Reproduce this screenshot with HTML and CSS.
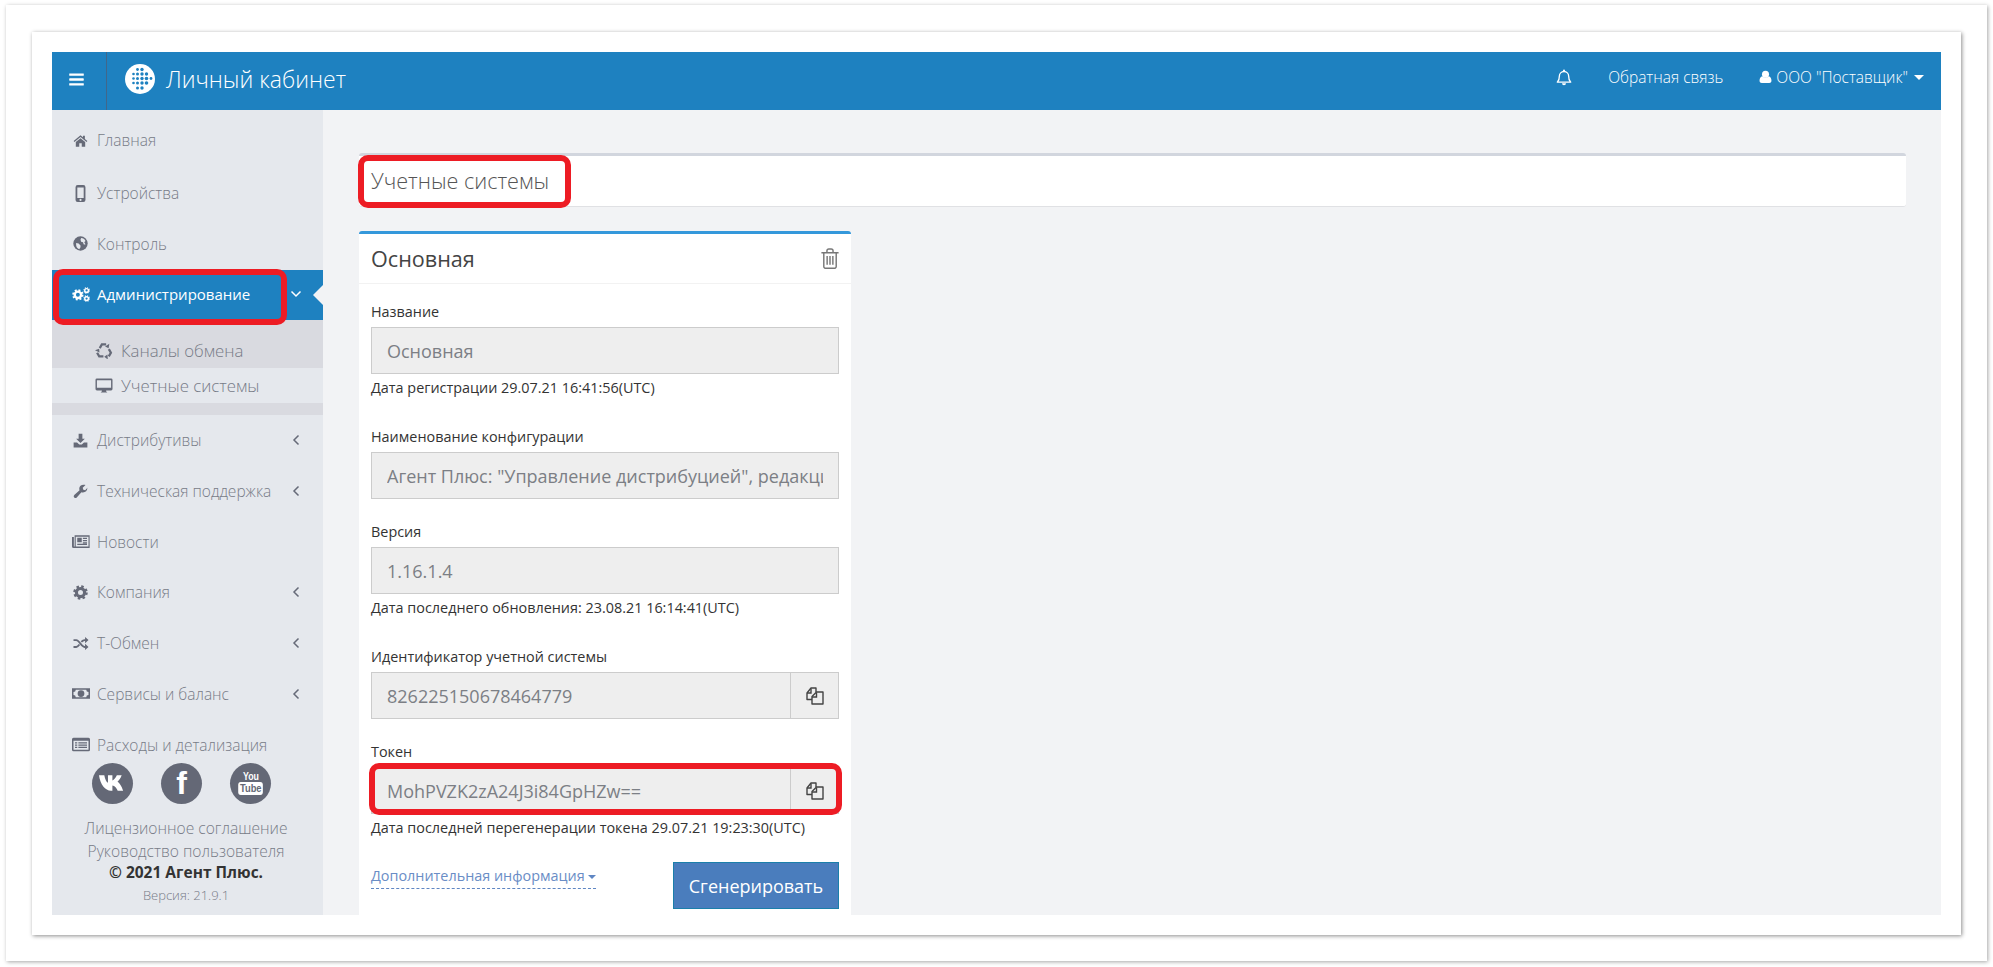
FILE: index.html
```html
<!DOCTYPE html>
<html lang="ru">
<head>
<meta charset="utf-8">
<title>Личный кабинет</title>
<link rel="stylesheet" href="styles.css">
</head>
<body>
<svg class="defs" width="0" height="0" aria-hidden="true">
  <symbol id="gear" viewBox="0 0 24 24">
    <circle cx="12" cy="12" r="6.5" fill="none" stroke="currentColor" stroke-width="5"/>
    <circle cx="12" cy="12" r="9.6" fill="none" stroke="currentColor" stroke-width="4" stroke-dasharray="3.9 3.64"/>
  </symbol>
  <g id="recycle-arrow">
    <path fill="none" stroke="currentColor" stroke-width="3.200" d="M6 8.600 9 3.500h6"/>
    <path fill="currentColor" d="M13.500 6.500l5 2.300 1-6.300z"/>
  </g>
</svg>
<div class="outer">
<div class="inner">
<div class="app">
  <header class="topbar">
    <button class="burger" type="button">
      <svg class="burger-icon" viewBox="0 0 1792 1792"><path fill="currentColor" d="M1664 1344v128q0 26-19 45t-45 19h-1408q-26 0-45-19t-19-45v-128q0-26 19-45t45-19h1408q26 0 45 19t19 45zm0-512v128q0 26-19 45t-45 19h-1408q-26 0-45-19t-19-45v-128q0-26 19-45t45-19h1408q26 0 45 19t19 45zm0-512v128q0 26-19 45t-45 19h-1408q-26 0-45-19t-19-45v-128q0-26 19-45t45-19h1408q26 0 45 19t19 45z"/></svg>
    </button>
    <div class="brand">
      <svg class="brand-logo" viewBox="0 0 30 30">
        <circle cx="15" cy="15" r="15" fill="#fff"/>
        <g fill="#1e81c0">
          <circle cx="12.500" cy="5.500" r="1.400"/><circle cx="17" cy="5.500" r="1.700"/>
          <circle cx="8.500" cy="10" r="1.300"/><circle cx="12.500" cy="10" r="1.500"/><circle cx="17" cy="10" r="1.700"/><circle cx="21.500" cy="10" r="1.700"/>
          <circle cx="8.500" cy="14.500" r="1.300"/><circle cx="12.500" cy="14.500" r="1.500"/><circle cx="17" cy="14.500" r="1.700"/><circle cx="21.500" cy="14.500" r="1.800"/><circle cx="26" cy="14.500" r="1.400"/>
          <circle cx="8.500" cy="19" r="1.300"/><circle cx="12.500" cy="19" r="1.500"/><circle cx="17" cy="19" r="1.700"/><circle cx="21.500" cy="19" r="1.800"/>
          <circle cx="12.500" cy="24" r="1.500"/><circle cx="17" cy="24" r="1.700"/>
        </g>
      </svg>
      <span class="brand-name">Личный кабинет</span>
    </div>
    <nav class="top-links">
      <svg class="bell" viewBox="0 0 24 24"><path fill="none" stroke="currentColor" stroke-width="2" stroke-linejoin="round" d="M12 3a7 7 0 0 0-7 7c0 6-2 7.500-3 9h20c-1-1.500-3-3-3-9a7 7 0 0 0-7-7z"/><path fill="currentColor" d="M10.500 1.500a1.500 1.500 0 0 1 3 0V3h-3zM9 20.500h6a3 3 0 0 1-6 0z"/></svg>
      <span class="top-link feedback">Обратная связь</span>
      <span class="top-link account">
        <svg class="user" viewBox="0 0 24 24"><circle cx="12" cy="7" r="6.500" fill="currentColor"/><path fill="currentColor" d="M1 19c0-5 2-8 5-8.500 1.500 1.500 3.500 2.200 6 2.200s4.500-.7 6-2.200c3 .5 5 3.500 5 8.500 0 3-2 4-4 4H5c-2 0-4-1-4-4z"/></svg>
        ООО "Поставщик"
        <span class="caret"></span>
      </span>
    </nav>
  </header>
  <div class="body-row">
    <aside class="sidebar">
      <ul class="menu">
        <li class="item first"><svg class="ico" viewBox="0 0 24 24"><path fill="currentColor" d="M12 3.500 1 12.800l1.300 1.600L12 6.300l9.700 8.100 1.300-1.600-4-3.400V4.500h-3v2.400zM4.500 14.500V22h5.500v-5.500h4V22h5.500v-7.500L12 8.300z"/></svg>Главная</li>
        <li class="item"><svg class="ico tall" viewBox="0 0 14 24"><path fill="currentColor" fill-rule="evenodd" d="M3 0h8a3 3 0 0 1 3 3v18a3 3 0 0 1-3 3H3a3 3 0 0 1-3-3V3a3 3 0 0 1 3-3zM2.500 3.500v15h9v-15zM7 19.500a1.500 1.500 0 1 0 0 3 1.500 1.500 0 0 0 0-3z"/></svg>Устройства</li>
        <li class="item"><svg class="ico" viewBox="0 0 24 24"><circle cx="12" cy="12" r="11.500" fill="currentColor"/><path fill="#e5e8ed" d="M13 3c3 0 6 2 7 5l-2 2 2 3c-1 1-2 1-3 0l-1-3-3-1-1-3zM5 11l4 1 3 3v3l-2 3c-3-1-5-4-5-7z"/></svg>Контроль</li>
        <li class="item active">
          <svg class="ico cogs" viewBox="0 0 29 24"><use href="#gear" x="0" y="3" width="19" height="19"/><use href="#gear" x="18" y="0" width="11" height="11"/><use href="#gear" x="18" y="13" width="11" height="11"/></svg>Администрирование
          <svg class="chev" viewBox="0 0 12 12"><path fill="none" stroke="currentColor" stroke-width="1.500" d="M1.500 3.500 6 8l4.500-4.500"/></svg>
          <span class="notch"></span>
          <span class="mark mark-admin"></span>
        </li>
        <li class="submenu">
          <div class="subitem"><svg class="ico-sub" viewBox="0 0 24 24"><use href="#recycle-arrow"/><use href="#recycle-arrow" transform="rotate(120 12 13)"/><use href="#recycle-arrow" transform="rotate(240 12 13)"/></svg>Каналы обмена</div>
          <div class="subitem current"><svg class="ico-sub" viewBox="0 0 24 24"><path fill="currentColor" fill-rule="evenodd" d="M2 2h20a2 2 0 0 1 2 2v13a2 2 0 0 1-2 2h-7c0 1.500.5 2 1.500 2.500V22h-9v-.5C8.500 21 9 20.500 9 19H2a2 2 0 0 1-2-2V4a2 2 0 0 1 2-2zm0 2.500V15h20V4.500z"/></svg>Учетные системы</div>
        </li>
        <li class="item"><svg class="ico" viewBox="0 0 24 24"><path fill="currentColor" d="M9 1h6v8h4l-7 7-7-7h4zM1 15h5.500l3.500 3.500h4l3.500-3.500H23v8H1z"/></svg>Дистрибутивы<svg class="chev-left" viewBox="0 0 12 12"><path fill="none" stroke="currentColor" stroke-width="1.500" d="M8.500 1.500 4 6l4.500 4.500"/></svg></li>
        <li class="item"><svg class="ico" viewBox="0 0 24 24"><path fill="currentColor" d="M23 6.500c0 4-3 7-7 7-1 0-1.800-.2-2.500-.5L6 21.500a2.800 2.800 0 0 1-4-4l8.500-7.500C10.200 9.300 10 8.500 10 7.500 10 3.500 13 1 17 1c1 0 2 .2 3 .7L15.500 6l1 3 3 1L23.500 5.500z"/></svg>Техническая поддержка<svg class="chev-left" viewBox="0 0 12 12"><path fill="none" stroke="currentColor" stroke-width="1.500" d="M8.500 1.500 4 6l4.500 4.500"/></svg></li>
        <li class="item"><svg class="ico wide" viewBox="0 0 24 20"><path fill="currentColor" fill-rule="evenodd" d="M3.500 1.500h20v17H2a2 2 0 0 1-2-2V4h2.500v12.500h1zM5 3.500v13h17v-13zM7 5h6v6H7zM14.500 5H20v1.500h-5.500zM14.500 8H20v1.500h-5.500zM14.500 11H20v1.500h-5.500zM7 13h13v1.500H7z"/></svg>Новости</li>
        <li class="item"><svg class="ico" viewBox="0 0 24 24"><use href="#gear" width="24" height="24"/></svg>Компания<svg class="chev-left" viewBox="0 0 12 12"><path fill="none" stroke="currentColor" stroke-width="1.500" d="M8.500 1.500 4 6l4.500 4.500"/></svg></li>
        <li class="item"><svg class="ico wide" viewBox="0 0 24 24"><path fill="none" stroke="currentColor" stroke-width="3" d="M0 6.500h4.500c5 0 8 11 13 11h2M0 17.500h4.500c2 0 3.500-2 5-4M12.500 9.500c1.500-1.500 3-3 5-3h2"/><path fill="currentColor" d="M18.500 1.500 24 6.500l-5.500 5zM18.500 12.500 24 17.500l-5.500 5z"/></svg>Т-Обмен<svg class="chev-left" viewBox="0 0 12 12"><path fill="none" stroke="currentColor" stroke-width="1.500" d="M8.500 1.500 4 6l4.500 4.500"/></svg></li>
        <li class="item"><svg class="ico wide" viewBox="0 0 24 16"><path fill="currentColor" fill-rule="evenodd" d="M0 1h24v14H0zM5 3a3 3 0 0 1-3 3v4a3 3 0 0 1 3 3h14a3 3 0 0 1 3-3V6a3 3 0 0 1-3-3zM12 3.500a4.500 4.500 0 1 1 0 9 4.500 4.500 0 0 1 0-9z"/></svg>Сервисы и баланс<svg class="chev-left" viewBox="0 0 12 12"><path fill="none" stroke="currentColor" stroke-width="1.500" d="M8.500 1.500 4 6l4.500 4.500"/></svg></li>
        <li class="item"><svg class="ico wide" viewBox="0 0 24 20"><path fill="currentColor" fill-rule="evenodd" d="M2 1h20a2 2 0 0 1 2 2v14a2 2 0 0 1-2 2H2a2 2 0 0 1-2-2V3a2 2 0 0 1 2-2zM2 5v12h20V5zM4 7h3v1.500H4zM8.500 7H20v1.500H8.500zM4 10h3v1.500H4zM8.500 10H20v1.500H8.500zM4 13h3v1.500H4zM8.500 13H20v1.500H8.500z"/></svg>Расходы и детализация</li>
      </ul>
      <div class="side-footer">
        <div class="socials">
          <span class="social"><svg class="vk" viewBox="0 0 28 16"><path fill="#fff" d="M0 0h5.500c.7 4 2.300 7.200 3.800 7.800V0h4.600v5.500C15.500 5 17.500 2.500 18.500 0h5c-.8 2.800-2.900 5.500-4.300 6.700 1.700 1 4.200 3.900 5.800 9.300h-5.600c-.9-2.600-3.200-5.200-5.500-5.500V16h-1.500C6.500 16 1.200 9.500 0 0z"/></svg></span>
          <span class="social fb">f</span>
          <span class="social yt"><span class="yt-you">You</span><span class="yt-tube">Tube</span></span>
        </div>
        <div class="foot-link first-link">Лицензионное соглашение</div>
        <div class="foot-link second-link">Руководство пользователя</div>
        <div class="foot-copy">© 2021 Агент Плюс.</div>
        <div class="foot-ver">Версия: 21.9.1</div>
      </div>
    </aside>
    <main class="content">
      <section class="title-panel">
        <h1 class="page-title">Учетные системы</h1>
        <span class="mark mark-title"></span>
      </section>
      <section class="card">
        <div class="card-head">
          <h2 class="card-title">Основная</h2>
          <svg class="trash" viewBox="0 0 18 22"><path fill="none" stroke="currentColor" stroke-width="1.500" d="M0 5h18M2.500 5v14.500a1.800 1.800 0 0 0 1.800 1.800h9.400a1.800 1.800 0 0 0 1.800-1.800V5M5.800 5V3c0-1.200.7-2 2-2h2.400c1.300 0 2 .8 2 2v2"/><path fill="none" stroke="currentColor" stroke-width="1.500" d="M6 8.500v9M9 8.500v9M12 8.500v9"/></svg>
        </div>
        <div class="card-body">
          <div class="group hinted">
            <div class="label">Название</div>
            <div class="field"><span class="value">Основная</span></div>
            <div class="hint">Дата регистрации 29.07.21 16:41:56(UTC)</div>
          </div>
          <div class="group">
            <div class="label">Наименование конфигурации</div>
            <div class="field"><span class="value">Агент Плюс: "Управление дистрибуцией", редакция 1.16</span></div>
          </div>
          <div class="group hinted">
            <div class="label">Версия</div>
            <div class="field"><span class="value">1.16.1.4</span></div>
            <div class="hint">Дата последнего обновления: 23.08.21 16:14:41(UTC)</div>
          </div>
          <div class="group">
            <div class="label">Идентификатор учетной системы</div>
            <div class="field with-addon"><span class="value">826225150678464779</span>
              <span class="addon"><svg class="copy" viewBox="0 0 18 18"><path fill="none" stroke="currentColor" stroke-width="1.400" stroke-linejoin="round" d="M6 12.500H1V6l4-5h5v4"/><path fill="none" stroke="currentColor" stroke-width="1.400" stroke-linejoin="round" d="M6 17V9.500L10.500 5H17v12z"/><path fill="none" stroke="currentColor" stroke-width="1.400" d="M5 1.500V6H1M10.500 5.500V10H6"/></svg></span>
            </div>
          </div>
          <div class="group token">
            <div class="label">Токен</div>
            <div class="field with-addon"><span class="value">MohPVZK2zA24J3i84GpHZw==</span>
              <span class="addon"><svg class="copy" viewBox="0 0 18 18"><path fill="none" stroke="currentColor" stroke-width="1.400" stroke-linejoin="round" d="M6 12.500H1V6l4-5h5v4"/><path fill="none" stroke="currentColor" stroke-width="1.400" stroke-linejoin="round" d="M6 17V9.500L10.500 5H17v12z"/><path fill="none" stroke="currentColor" stroke-width="1.400" d="M5 1.500V6H1M10.500 5.500V10H6"/></svg></span>
              <span class="mark mark-token"></span>
            </div>
            <div class="hint">Дата последней перегенерации токена 29.07.21 19:23:30(UTC)</div>
          </div>
          <div class="actions">
            <span class="more">Дополнительная информация <span class="more-caret"></span></span>
            <button class="generate" type="button">Сгенерировать</button>
          </div>
        </div>
      </section>
    </main>
  </div>
</div>
</div>
</div>
</body>
</html>
```
FILE: styles.css
```css
* { box-sizing: border-box; }
html, body { margin: 0; padding: 0; height: 100%; background: #fff; overflow: hidden; }
body { font-family: "Open Sans", "Noto Sans", sans-serif; font-size: 14px; color: #333; }
.defs { position: absolute; }
ul { list-style: none; margin: 0; padding: 0; }
h1, h2 { margin: 0; font-weight: 400; }
button { font-family: inherit; }

.outer { margin: 5px 6px; height: 956px; padding: 27px 26px 26px; background: #fff; box-shadow: 1px 1px 4px rgba(0,0,0,.35); }
.inner { height: 903px; padding: 20px; background: #fff; box-shadow: 1px 1px 4px rgba(0,0,0,.45); }
.app { height: 863px; display: flex; flex-direction: column; }

.topbar { height: 58px; flex: none; background: #1e81c0; color: #fff; display: flex; align-items: stretch; }
.burger { width: 55px; padding: 0 5px 4px 0; border: 0; border-right: 1px solid #41678a; background: none; color: #fff; display: flex; align-items: center; justify-content: center; }
.burger-icon { width: 17px; height: 17px; }
.brand { display: flex; align-items: center; margin-left: 18px; padding-bottom: 4px; }
.brand-logo { width: 30px; height: 30px; }
.brand-name { margin-left: 11px; font-size: 23px; font-weight: 300; line-height: 30px; }
.top-links { margin-left: auto; display: flex; align-items: center; padding: 0 17px 8px 0; }
.bell { width: 16px; height: 17px; }
.top-link { font-size: 15.5px; font-weight: 300; white-space: nowrap; }
.feedback { margin-left: 36px; }
.account { margin-left: 36px; display: flex; align-items: center; }
.user { width: 13px; height: 14px; margin-right: 4px; }
.caret { width: 0; height: 0; margin-left: 6px; border: 5px solid transparent; border-top-color: #fff; border-bottom: 0; }

.body-row { flex: 1; display: flex; min-height: 0; }
.sidebar { width: 271px; flex: none; background: #e5e8ed; color: #777b87; display: flex; flex-direction: column; font-weight: 300; }
.menu { padding-top: 5px; }
.item { position: relative; height: 50.7px; padding: 0 21px 0 20px; display: flex; align-items: center; font-size: 15.5px; white-space: nowrap; }
.item.first { margin-bottom: 2px; }
.ico { width: 15px; height: 15px; margin: 0 9px 0 1px; color: #666a78; flex: none; }
.ico.wide { width: 18px; margin: 0 7px 0 0; }
.ico.tall { height: 17px; }
.ico.cogs { width: 18px; margin: 0 7px 0 0; }
.item.active { margin-top: 1px; padding-bottom: 2px; background: #1e81c0; color: #fff; height: 50px; font-weight: 400; font-size: 15px; }
.item.active .ico { color: #fff; }
.chev { width: 12px; height: 12px; margin-left: auto; color: #fff; }
.chev-left { width: 12px; height: 12px; margin-left: auto; color: #666a78; }
.notch { position: absolute; right: 0; top: 15px; border: 10px solid transparent; border-right-color: #f2f3f5; border-left: 0; }
.submenu { background: #d9dae0; padding: 13px 0 12px; }
.subitem { height: 35px; padding-left: 43px; display: flex; align-items: center; font-size: 16.8px; }
.subitem.current { background: #e5e8ed; }
.ico-sub { width: 18px; height: 17px; margin-right: 8px; color: #666a78; }

.side-footer { margin-top: -7px; padding-right: 3px; text-align: center; }
.socials { display: flex; justify-content: center; gap: 28px; padding-right: 9px; }
.social { width: 41px; height: 41px; border-radius: 50%; background: #646876; color: #fff; display: flex; align-items: center; justify-content: center; }
.vk { width: 27px; height: 16px; }
.fb { font-family: "Liberation Sans", sans-serif; font-size: 32px; font-weight: 700; line-height: 41px; }
.yt { flex-direction: column; line-height: 1; }
.yt-you { font-family: "Liberation Sans", sans-serif; font-size: 11px; font-weight: 700; line-height: 11px; transform: scaleX(.8); }
.yt-tube { font-family: "Liberation Sans", sans-serif; font-size: 11px; font-weight: 700; line-height: 13px; background: #fff; color: #646876; border-radius: 3px; padding: 0 2px; transform: scaleX(.85); }
.foot-link { font-size: 15.6px; line-height: 21px; }
.first-link { margin-top: 14px; }
.second-link { margin-top: 2px; }
.foot-copy { font-size: 15.5px; font-weight: 700; line-height: 20px; color: #333; }
.foot-ver { margin-top: 5px; font-size: 13px; line-height: 17px; }

.content { flex: 1; min-width: 0; background: #f2f3f5; padding: 43px 35px 0 36px; overflow: hidden; }
.title-panel { position: relative; height: 54px; padding: 0 0 2px 12px; background: #fff; border-top: 3px solid #d2d6de; border-bottom: 1px solid #e0e1e4; border-radius: 3px; display: flex; align-items: center; }
.page-title { font-size: 21.6px; font-weight: 300; color: #555; }
.card { margin-top: 24px; width: 492px; background: #fff; border-top: 3px solid #3498db; border-radius: 3px 3px 0 0; }
.card-head { height: 50px; padding: 0 12px; display: flex; align-items: center; justify-content: space-between; border-bottom: 1px solid #f2f2f2; }
.card-title { font-size: 21.6px; color: #444; }
.trash { width: 18px; height: 21px; color: #777; }
.card-body { padding: 17px 12px 20px; }
.group { margin-bottom: 22px; }
.group.hinted { margin-bottom: 30px; }
.group.token { margin-bottom: 26px; }
.label { font-size: 14.4px; line-height: 21px; margin-bottom: 5px; color: #333; }
.field { position: relative; height: 47px; background: #eee; border: 1px solid #ccc; padding: 0 15px; display: flex; align-items: center; color: #7c7f85; font-size: 18px; }
.value { flex: 1; min-width: 0; white-space: nowrap; overflow: hidden; }
.with-addon { padding-right: 0; }
.addon { width: 48px; height: 45px; flex: none; border-left: 1px solid #ccc; display: flex; align-items: center; justify-content: center; color: #444; }
.copy { width: 18px; height: 18px; }
.hint { margin-top: 5px; font-size: 14.4px; line-height: 17px; color: #333; }
.actions { display: flex; justify-content: space-between; align-items: flex-start; }
.more { margin-top: 4px; height: 23px; line-height: 20px; border-bottom: 1px dashed #5f86c3; color: #6a8dc6; font-size: 14.4px; }
.more-caret { display: inline-block; vertical-align: middle; border: 4px solid transparent; border-top-color: #5f86c3; border-bottom: 0; }
.generate { width: 166px; height: 47px; padding: 0; background: #4a7dbd; border: 1px solid #1b7faa; color: #fff; font-size: 18px; }

.mark { position: absolute; border: 6px solid #ed1c24; border-radius: 10px; pointer-events: none; }
.mark-admin { left: 1px; top: -1px; width: 234px; height: 56px; }
.mark-title { left: -1px; top: -1px; width: 213px; height: 53px; }
.mark-token { left: -3px; top: -5px; width: 473px; height: 52px; }
```
